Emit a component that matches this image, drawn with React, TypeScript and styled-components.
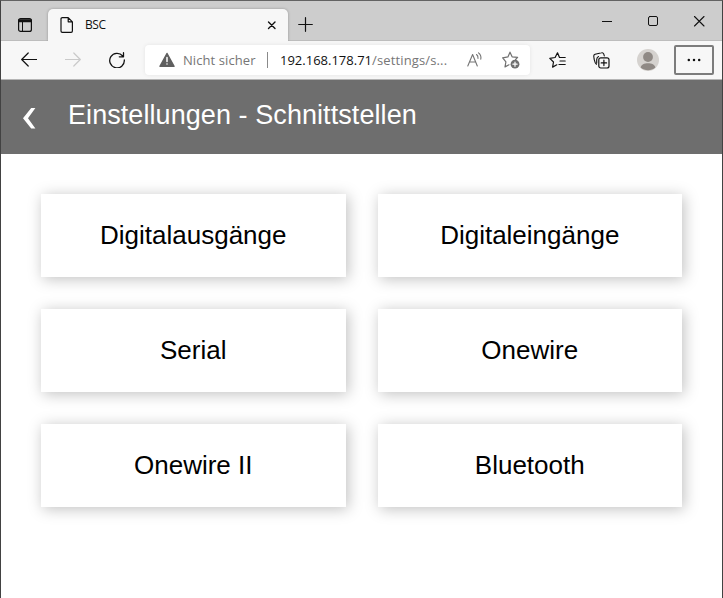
import React from "react";
import styled, { createGlobalStyle } from "styled-components";

const GlobalStyle = createGlobalStyle`
  * { box-sizing: border-box; }
  body { margin: 0; background: #fff; overflow: hidden; }
`;

const Window = styled.div`
  width: 723px;
  height: 598px;
  display: flex;
  flex-direction: column;
  border: 1px solid #424242;
  border-top-color: #636363;
  border-bottom: 0;
  background: #fff;
  font-family: "Liberation Sans", Arial, sans-serif;
`;

const TabStrip = styled.div`
  height: 40px;
  flex: none;
  display: flex;
  background: linear-gradient(#cdcdcd 39px, #bdbdbd 39px);
`;

const TabActions = styled.div`
  width: 47px;
  padding: 17px 0 0 17px;
`;

const Tab = styled.div`
  width: 240px;
  height: 32px;
  margin-top: 8px;
  padding: 0 11px 0 12px;
  display: flex;
  align-items: center;
  border-radius: 5px 5px 0 0;
  background: #f7f7f7;
  box-shadow: 0 0 3px rgba(0, 0, 0, 0.28);
  clip-path: inset(-4px -4px 0 -4px);
`;

const TabTitle = styled.span`
  flex: 1;
  margin-left: 11px;
  font: 12px/16px "Open Sans", "Noto Sans", sans-serif;
  letter-spacing: -0.4px;
  color: #111;
`;

const NewTab = styled.div`
  padding: 16px 0 0 10px;
  flex: 1;
`;

const WindowControls = styled.div`
  display: flex;
  gap: 30px;
  padding: 12px 15px 0 0;
`;

const Toolbar = styled.div`
  height: 39px;
  flex: none;
  display: flex;
  align-items: center;
  background: #f7f7f7;
  border-bottom: 1px solid #b5b5b5;
`;

const Glyph = styled.svg<{ $w: number; $h?: number; $ml?: number; $color?: string }>`
  display: block;
  flex: none;
  width: ${(p) => p.$w}px;
  height: ${(p) => p.$h ?? p.$w}px;
  margin-left: ${(p) => p.$ml ?? 0}px;
  color: ${(p) => p.$color ?? "#111"};
  fill: none;
  stroke: currentColor;
  stroke-width: 1.2;
  stroke-linecap: round;
  stroke-linejoin: round;
`;

const AddressBar = styled.div`
  width: 385px;
  height: 30px;
  margin-left: 20px;
  padding-left: 14px;
  display: flex;
  align-items: center;
  border-radius: 4px;
  background: #fff;
  box-shadow: 0 0 4px rgba(0, 0, 0, 0.08);
  font: 13px/20px "Open Sans", "Noto Sans", sans-serif;
  color: #767676;
  white-space: nowrap;
`;

const Security = styled.span`
  width: 74px;
  margin-left: 8px;
  letter-spacing: 0.08px;
`;

const Divider = styled.span`
  width: 1px;
  height: 16px;
  margin-left: 10px;
  background: #8a8a8a;
`;

const Url = styled.span`
  width: 169px;
  margin-left: 12px;
  letter-spacing: 0.14px;
`;

const Host = styled.span`
  color: #111;
  letter-spacing: 0;
`;

const MenuButton = styled.div`
  width: 40px;
  height: 30px;
  margin-left: 15px;
  display: flex;
  align-items: center;
  justify-content: center;
  border: 2px solid #7c7c7c;
  border-radius: 2px;
`;

const PageHeader = styled.header`
  height: 74px;
  flex: none;
  display: flex;
  background: #6e6e6e;
  color: #fff;
`;

const BackLink = styled.div`
  width: 67px;
  padding: 28px 0 0 21px;
`;

const Title = styled.h1`
  margin: 19px 0 0;
  font-size: 27px;
  line-height: 32px;
  font-weight: 400;
  letter-spacing: 0.07px;
`;

const CardGrid = styled.main`
  display: grid;
  grid-template-columns: 1fr 1fr;
  grid-auto-rows: 83px;
  gap: 32px;
  padding: 40px 40px 0;
`;

const Card = styled.div`
  display: flex;
  align-items: center;
  justify-content: center;
  padding-bottom: 2px;
  background: #fff;
  box-shadow: 2px 2px 14px rgba(0, 0, 0, 0.25);
  font-size: 26px;
  line-height: 30px;
  color: #000;
`;

const cards = ["Digitalausgänge", "Digitaleingänge", "Serial", "Onewire", "Onewire II", "Bluetooth"];

export default function App() {
  return (
    <Window>
      <GlobalStyle />
      <TabStrip>
        <TabActions>
          <Glyph $w={14} viewBox="0 0 14 14">
            <rect x=".6" y=".6" width="12.8" height="12.8" rx="2" />
            <path d="M1 2h12M1 3.3h12" strokeWidth="1.7" />
            <path d="M4.5 4v9" strokeWidth="1" />
          </Glyph>
        </TabActions>
        <Tab>
          <Glyph $w={14} $h={16} viewBox="0 0 14 16">
            <path d="M2.3.6h5.9l4.2 4.2v9.3a1.3 1.3 0 0 1-1.3 1.3H2.3A1.3 1.3 0 0 1 1 14.1V1.9A1.3 1.3 0 0 1 2.3.6ZM8.2.8v4h4" />
          </Glyph>
          <TabTitle>BSC</TabTitle>
          <Glyph $w={10} viewBox="0 0 10 10">
            <path d="m1.5 2 6.5 6.5m0-6.5-6.5 6.5" strokeWidth="1.4" />
          </Glyph>
        </Tab>
        <NewTab>
          <Glyph $w={15} viewBox="0 0 15 15">
            <path d="M.7 7.5h13.6M7.5.7v13.6" />
          </Glyph>
        </NewTab>
        <WindowControls>
          <Glyph $w={16} viewBox="0 0 16 16">
            <path d="M3 8.5h10" strokeWidth="1" strokeLinecap="butt" />
          </Glyph>
          <Glyph $w={16} viewBox="0 0 16 16">
            <rect x="3.5" y="3.5" width="9" height="9" rx="1.5" strokeWidth="1" />
          </Glyph>
          <Glyph $w={16} viewBox="0 0 16 16">
            <path d="m3.5 3.5 9.5 9.5m0-9.5L3.5 13" strokeWidth="1.1" />
          </Glyph>
        </WindowControls>
      </TabStrip>

      <Toolbar>
        <Glyph $w={16} viewBox="0 0 16 16" $ml={20}>
          <path d="M15.5 7.5H.7M7.2 1 .7 7.500l6.500 6.500" />
        </Glyph>
        <Glyph $w={16} viewBox="0 0 16 16" $ml={28} $color="#cacaca">
          <path d="M.5 7.500h14.800M8.800 1l6.500 6.500-6.500 6.500" />
        </Glyph>
        <Glyph $w={16} viewBox="0 0 16 16" $ml={28}>
          <path d="M13.7 4A7.3 7.3 0 1 0 15.3 8M14.5.7v4.1h-4.2" strokeWidth="1.3" />
        </Glyph>
        <AddressBar>
          <Glyph $w={16} viewBox="0 0 16 16" $color="#5f5f5f">
            <path d="M8 1.5 15 14.3H1Z" fill="currentColor" strokeWidth="1.5" />
            <path d="M8 5.5v4M8 12v.1" stroke="#fff" strokeWidth="1.5" />
          </Glyph>
          <Security>Nicht sicher</Security>
          <Divider />
          <Url><Host>192.168.178.71</Host>/settings/s...</Url>
          <Glyph $w={16} viewBox="0 0 16 16" $ml={18} $color="#747474">
            <path d="M.8 14 5.6 2.5 10.3 14M2.5 10h6.3M9.5 2.5c1.2.9 1.700 2.200 1.500 3.900M11.500.9c2 1.500 2.800 3.600 2.300 6.300" strokeWidth="1.1" />
          </Glyph>
          <Glyph $w={18} viewBox="0 0 18 18" $ml={19} $color="#707070">
            <path d="m8 1.200 2.100 4.600 5.500.6-2 2.100M7 13.800l-4 2.100.9-5L.7 6.800l5.200-.9L8 1.200" />
            <circle cx="13" cy="13.200" r="4.400" fill="currentColor" stroke="none" />
            <path d="M10.900 13.200h4.200M13 11.100v4.200" stroke="#fff" strokeWidth="1.2" />
          </Glyph>
        </AddressBar>
        <Glyph $w={17} $h={16} viewBox="0 0 17 16" $ml={19}>
          <path d="M10.500 5.500 8.500.8 6.100 5.500.8 6.300l3.700 3.700-.9 5.100 4.200-2.300M10.500 5.500h5.700M11 9h5.200M10 12.500h6.200" />
        </Glyph>
        <Glyph $w={17} $h={17} viewBox="0 0 17 17" $ml={27}>
          <path d="M3.400 12.300C2 11.500 1.700 9.500 1.100 7L.8 4.500A2 2 0 0 1 2.100 2.300L8.500.8a1.800 1.800 0 0 1 2.200 1.100l.6 2M3.700 11V7.500a3.500 3.500 0 0 1 1.800-3" strokeWidth="1.1" />
          <rect x="5.800" y="5.800" width="10.200" height="10.200" rx="2" fill="#f7f7f7" />
          <path d="M10.900 8.200v5.400M8.200 10.900h5.400" />
        </Glyph>
        <Glyph $w={22} viewBox="0 0 22 22" $ml={27} $color="#8f8985">
          <circle cx="11" cy="11" r="11" fill="#d5d2cf" stroke="none" />
          <circle cx="11" cy="8" r="4.9" fill="currentColor" stroke="none" />
          <path d="M3.7 18.5C4 12.7 18 12.7 18.3 18.5 14.5 22 7.500 22 3.700 18.500Z" fill="currentColor" stroke="none" />
        </Glyph>
        <MenuButton>
          <Glyph $w={14} $h={4} viewBox="0 0 14 4">
            <g fill="currentColor" stroke="none">
              <circle cx="1.8" cy="2" r="1.25" />
              <circle cx="7" cy="2" r="1.25" />
              <circle cx="12.2" cy="2" r="1.25" />
            </g>
          </Glyph>
        </MenuButton>
      </Toolbar>

      <PageHeader>
        <BackLink>
          <Glyph $w={14} $h={21} viewBox="0 0 14 21" $color="#fff">
            <path d="M9.2 0h4.2L6 10.2 13.4 20.500H9.200L1 10.200Z" fill="currentColor" stroke="none" />
          </Glyph>
        </BackLink>
        <Title>Einstellungen - Schnittstellen</Title>
      </PageHeader>
      <CardGrid>
        {cards.map((label) => (
          <Card key={label}>{label}</Card>
        ))}
      </CardGrid>
    </Window>
  );
}
